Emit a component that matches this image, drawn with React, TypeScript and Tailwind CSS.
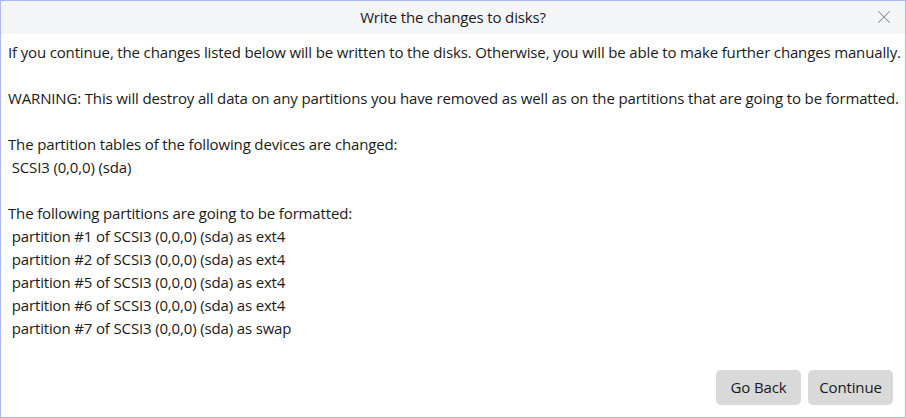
import { X } from "lucide-react"

const formatted = [
  "partition #1 of SCSI3 (0,0,0) (sda) as ext4",
  "partition #2 of SCSI3 (0,0,0) (sda) as ext4",
  "partition #5 of SCSI3 (0,0,0) (sda) as ext4",
  "partition #6 of SCSI3 (0,0,0) (sda) as ext4",
  "partition #7 of SCSI3 (0,0,0) (sda) as swap",
]

export default function App() {
  return (
    <div className="w-[906px] h-[418px] flex flex-col bg-white border border-[#a9b9f3] text-[#1a1a1a] font-['Open_Sans',sans-serif] overflow-hidden">
      <div className="h-[33px] shrink-0 bg-[#f4f5f7] relative flex items-center justify-center">
        <span className="text-[15px] tracking-[-0.15px]">Write the changes to disks?</span>
        <button className="absolute right-[10px] top-[5px] text-[#8a8a8a]">
          <X size={22} strokeWidth={1.1} />
        </button>
      </div>

      <div className="flex-1 px-[7px] pt-[7px] text-[15px] leading-[23px] whitespace-pre tracking-[-0.15px]">
        <p>If you continue, the changes listed below will be written to the disks. Otherwise, you will be able to make further changes manually.</p>
        <p>&nbsp;</p>
        <p>WARNING: This will destroy all data on any partitions you have removed as well as on the partitions that are going to be formatted.</p>
        <p>&nbsp;</p>
        <p>The partition tables of the following devices are changed:</p>
        <p> SCSI3 (0,0,0) (sda)</p>
        <p>&nbsp;</p>
        <p>The following partitions are going to be formatted:</p>
        {formatted.map(line => (
          <p key={line}> {line}</p>
        ))}
      </div>

      <div className="flex justify-end gap-[7px] pl-[12px] pr-[12px] pb-[12px]">
        <button className="w-[85px] h-[35px] rounded-[5px] bg-[#d9d9d9] text-[15px] tracking-[-0.15px]">Go Back</button>
        <button className="w-[85px] h-[35px] rounded-[5px] bg-[#d9d9d9] text-[15px] tracking-[-0.15px]">Continue</button>
      </div>
    </div>
  )
}
